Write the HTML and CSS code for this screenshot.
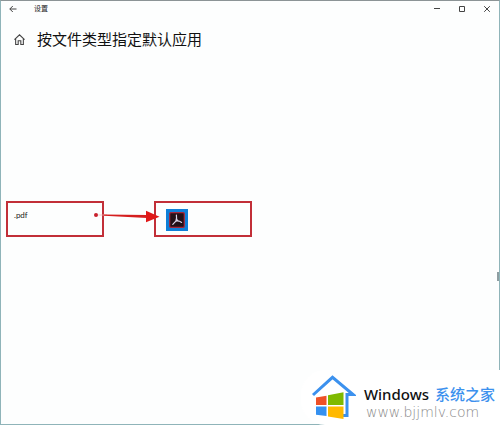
FILE: index.html
```html
<!DOCTYPE html>
<html lang="zh-CN">
<head>
    <meta charset="UTF-8">
    <meta name="viewport" content="width=device-width, initial-scale=1.0">
    <title>设置</title>
    <link rel="stylesheet" href="styles.css">
</head>
<body>
    <div class="window">
        <div class="title-bar">
            <button class="title-button" type="button" aria-label="返回">
                <svg width="8" height="8" viewBox="0 0 8 8"><path d="M7.5 4H.8M3.8 1L.8 4l3 3"/></svg>
            </button>
            <span class="title-text">设置</span>
            <div class="window-controls">
                <button class="title-button" type="button" aria-label="最小化">
                    <svg width="6" height="6" viewBox="0 0 6 6"><path d="M0 2.5h6"/></svg>
                </button>
                <button class="title-button" type="button" aria-label="最大化">
                    <svg width="6" height="6" viewBox="0 0 6 6"><path d="M.5.5h5v5h-5z"/></svg>
                </button>
                <button class="title-button" type="button" aria-label="关闭">
                    <svg width="6" height="6" viewBox="0 0 6 6"><path d="M.2.2l5.6 5.6M5.8.2L.2 5.8"/></svg>
                </button>
            </div>
        </div>

        <header class="page-header">
            <a class="home-link" href="#" aria-label="主页">
                <svg width="11" height="11" viewBox="0 0 10 10"><path d="M.4 5.2L5 .7l4.6 4.5M1.5 4.4v5.1h2.3V6.2h2.4v3.3h2.3V4.4"/></svg>
            </a>
            <h1>按文件类型指定默认应用</h1>
        </header>

        <main class="associations">
            <div class="association">
                <div class="box file-type">.pdf</div>
                <div class="box app">
                    <button class="app-button" type="button" aria-label="Adobe Acrobat">
                        <svg width="22" height="22" viewBox="0 0 22 22">
                            <rect width="22" height="22" fill="#0f7fd8"/>
                            <rect x="3.7" y="3.7" width="14.6" height="14.6" rx="1" fill="#231018" stroke="#a8283c" stroke-width="1.2"/>
                            <path d="M10.4 6.2C10.8 8.5 10.6 10.8 9.8 12.2L6.8 15.3M9.8 12.2C12 11.6 14 12.2 15.6 13.4M10.4 9.5C10.8 11 11.6 11.8 12.6 12.3" fill="none" stroke="#d9d3e6" stroke-width="1.2" stroke-linecap="round"/>
                        </svg>
                    </button>
                </div>
                <svg class="arrow" width="66" height="14" viewBox="0 0 66 14">
                    <circle cx="2" cy="6" r="2" fill="#c8202c"/>
                    <path d="M4 5.7L13 5.6v1L4 6.3z" fill="#f0a8a8"/>
                    <path d="M10 5.6L53 6v3L10 6.8z" fill="#d51f1f"/>
                    <path d="M52 1.8L65.5 7.8 52 13.2z" fill="#e01818"/>
                </svg>
            </div>
        </main>

        <div class="scroll-thumb"></div>
    </div>

    <a class="brand" href="#">
        <svg width="45" height="46" viewBox="0 0 45 46">
            <path d="M2 20L21.5 2.3 42 19.5h-6V40.500h-6" fill="none" stroke="#3c91ee" stroke-width="3"/>
            <path d="M5 22.5l10.5-1.8V30H5z" fill="#ee5026"/>
            <path d="M17 20.3l15.500-3V30H17z" fill="#7fba00"/>
            <path d="M5 31.5h10.5V41L5 39.7z" fill="#3490f0"/>
            <path d="M17 31.5h15.500V44L17 41.5z" fill="#ffb900"/>
        </svg>
        <span class="brand-text">
            <span class="brand-name">Windows <span class="brand-accent">系统之家</span></span>
            <span class="brand-url">www.bjjmlv.com</span>
        </span>
    </a>
</body>
</html>
```
FILE: styles.css
```css
* {
    box-sizing: border-box;
}
body {
    margin: 0;
    font-family: "Noto Sans", "Noto Sans CJK SC", sans-serif;
    color: #222;
    background-color: #fdfefe;
}
button {
    padding: 0;
    border: none;
    background: none;
}
svg {
    display: block;
}
.window {
    position: relative;
    display: flex;
    flex-direction: column;
    min-height: 100vh;
    border: 1px solid #8fb4b9;
    border-top-color: #8c9496;
}
.title-bar {
    display: flex;
    align-items: center;
    height: 16px;
    padding-left: 8px;
}
.title-button {
    display: flex;
    align-items: center;
    justify-content: center;
    width: 8px;
    height: 16px;
}
.title-button svg,
.home-link svg {
    fill: none;
    stroke: #444;
    stroke-width: 1;
}
.title-text {
    margin-left: 17px;
    font-size: 7px;
    line-height: 16px;
}
.window-controls {
    display: flex;
    margin-left: auto;
}
.window-controls .title-button {
    width: 25px;
}
.page-header {
    display: flex;
    align-items: center;
    gap: 12px;
    padding: 10px 13px;
}
h1 {
    margin: 0;
    font-size: 15px;
    font-weight: 400;
    line-height: 24px;
    color: #111;
}
.associations {
    padding: 140px 5px 0;
}
.association {
    position: relative;
    display: flex;
    gap: 50px;
}
.box {
    width: 98px;
    height: 36px;
    border: 2px solid #c22f38;
}
.file-type {
    padding: 6px;
    font-family: "Lato", sans-serif;
    font-size: 8px;
    line-height: 12px;
}
.app {
    padding: 6px 10px;
}
.app-button {
    display: block;
}
.arrow {
    position: absolute;
    top: 8px;
    left: 88px;
}
.scroll-thumb {
    position: absolute;
    top: 64%;
    right: 0;
    width: 2px;
    height: 9px;
    background-color: #8f9ea2;
}
.brand {
    position: absolute;
    right: 0;
    bottom: 0;
    display: flex;
    align-items: flex-start;
    gap: 8px;
    height: 55px;
    padding: 5px 5px 0 10px;
    border-top-left-radius: 24px;
    border-bottom-left-radius: 24px;
    background-color: #fff;
    text-decoration: none;
}
.brand-text {
    display: flex;
    flex-direction: column;
    padding-top: 9px;
}
.brand-name {
    font-size: 15px;
    font-weight: 500;
    line-height: 20px;
    color: #111;
    white-space: nowrap;
}
.brand-accent {
    margin-left: 2px;
    font-size: 15px;
    color: #3c91ee;
}
.brand-url {
    padding-left: 2px;
    font-family: "DejaVu Sans", sans-serif;
    font-size: 14px;
    font-weight: 200;
    line-height: 16px;
    color: #888;
}
```
